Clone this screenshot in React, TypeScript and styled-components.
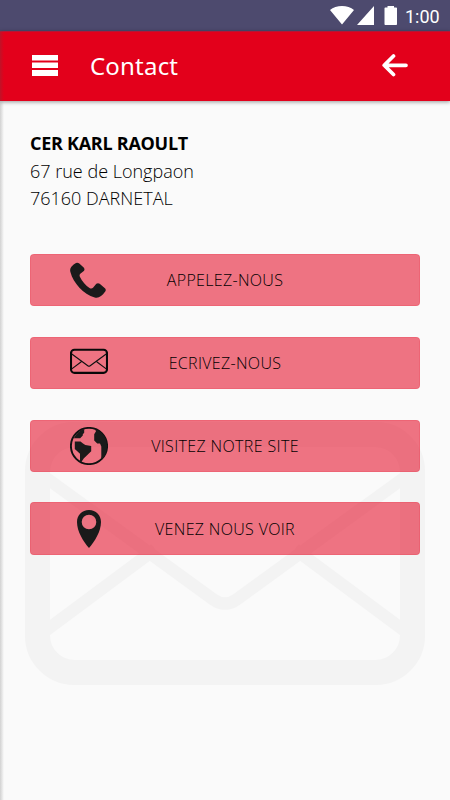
import React from "react";
import styled, { createGlobalStyle } from "styled-components";

const GlobalStyle = createGlobalStyle`
  * { box-sizing: border-box; }
  body { margin: 0; background: #fafafa; }
`;

const Screen = styled.div`
  position: relative;
  display: flex;
  flex-direction: column;
  width: 450px;
  height: 800px;
  overflow: hidden;
  background: #fafafa;
  color: #000;
  font-family: "Open Sans", sans-serif;
`;

const StatusBar = styled.div`
  display: flex;
  justify-content: flex-end;
  height: 31px;
  background: #4d4a6e;
`;

const StatusIcons = styled.svg`
  width: 75px;
  height: 31px;
  fill: #fff;
`;

const Clock = styled.time`
  width: 45px;
  color: #fff;
  font: 400 18px/33px Roboto, sans-serif;
`;

const Header = styled.header`
  display: flex;
  align-items: center;
  flex: none;
  height: 70px;
  padding: 0 42px 2px 32px;
  background: #e3001b;
  border-top: 1px solid #b61635;
  box-shadow: 0 1px 4px rgba(0, 0, 0, 0.4);
`;

const IconButton = styled.button`
  display: flex;
  padding: 0;
  border: 0;
  background: none;
`;

const Title = styled.h1`
  flex: 1;
  margin: 0 0 0 32px;
  color: #fff;
  font: 400 24px/34px "Noto Sans", sans-serif;
  letter-spacing: 0.2px;
`;

const Content = styled.main`
  position: relative;
  flex: 1;
  padding: 29px 30px 0;
`;

const Address = styled.address`
  height: 123.8px;
  font-size: 18px;
  font-weight: 300;
  font-style: normal;
  line-height: 27.5px;
`;

const AddressLine = styled.div`
  letter-spacing: 0;
`;

const Company = styled.strong`
  display: block;
  font-weight: 700;
  letter-spacing: -0.27px;
`;

const Actions = styled.nav`
  display: flex;
  flex-direction: column;
  gap: 30.2px;
`;

const Action = styled.button`
  display: grid;
  grid-template-columns: 98px 1fr 98px;
  align-items: center;
  height: 52.7px;
  padding: 0;
  border: 1px solid rgba(227, 0, 27, 0.12);
  border-radius: 4px;
  background: rgba(227, 0, 27, 0.54);
  color: #000;
`;

const ActionIcon = styled.svg`
  width: 38px;
  height: 38px;
  margin-left: 39px;
`;

const ActionLabel = styled.span<{ $spacing: number }>`
  font: 300 16px/22px "Open Sans", sans-serif;
  letter-spacing: ${({ $spacing }) => $spacing}px;
  text-align: center;
  white-space: nowrap;
`;

const Watermark = styled.svg`
  position: absolute;
  left: 25px;
  top: 422px;
  width: 400px;
  height: 263px;
  pointer-events: none;
`;

const EdgeShadow = styled.div`
  position: absolute;
  left: 0;
  top: 31px;
  bottom: 0;
  width: 4px;
  background: linear-gradient(to right, rgba(80, 80, 80, 0.24), rgba(80, 80, 80, 0));
`;

const Envelope = () => (
  <>
    <rect x="12.5" y="12.5" width="375" height="238" rx="37" strokeWidth="25" />
    <path
      d="M18 53.6L188 177.2Q200 185.9 212 177.2L382 53.6M18 210.7L130 127.3M382 210.7L270 127.3"
      strokeWidth="12.2"
    />
  </>
);

const Phone = () => (
  <path
    fill="#1a1a1a"
    transform="translate(0 .6)"
    d="M6 1.4Q7.5.6 9 1.7L13.7 6Q15.2 8 13.8 9.5L10.3 12.2Q9 13.4 10 15.3C12 19.5 16 24 19.5 26.3Q21.5 27.7 23 26.2L26.3 22.2Q28 20.9 29.7 22.2L35.2 26.8Q36.4 28.4 35 30.2C32 34.8 28.5 36.8 24.7 35.8C13.5 32.8 3.3 21.3.4 10.3Q-.5 7 1.6 4.8Q3.5 2.5 6 1.4Z"
  />
);

const Mail = () => (
  <g transform="translate(0 -.9)">
    <rect x="1" y="6.6" width="36" height="23.2" rx="3.5" fill="none" stroke="#080808" strokeWidth="2.1" />
    <path
      d="M1.8 10.9L17.8 22.7Q19 23.6 20.2 22.7L36.2 10.9M1.8 25.8L11.3 18.7M36.2 25.8L26.7 18.7"
      fill="none"
      stroke="#111"
      strokeWidth="1.15"
    />
  </g>
);

const Globe = () => (
  <>
    <circle cx="19" cy="19" r="18.1" fill="none" stroke="#111" strokeWidth="1.9" />
    <path
      fill="#1a1a1a"
      d="M4 11Q7.5 4.2 14.2 2.1V5.8L12.8 7.2V8.5L10.2 11.3H4ZM25 2.2C32 4 37 11 37 18.5C37 25 34.7 29.8 31.1 32.8L31.3 29V19.5L30 16.5H27.2L24.2 13.5V7.2L26 4.3ZM4.8 14.5H10.5L13 16.4L15.3 18.1L21.2 19V24.2L13.7 31.4L11.2 35.2H10V26.8L7 24L4.8 22Z"
    />
  </>
);

const Pin = () => (
  <path
    fill="#1a1a1a"
    fillRule="evenodd"
    d="M19 0C26 0 31 5 31 12C31 21.5 24.7 31.4 19 38C13.3 31.4 7 21.5 7 12C7 5 12 0 19 0ZM19 4.7A7.3 7.3 0 1 0 19 19.3A7.3 7.3 0 1 0 19 4.7Z"
  />
);

const actions = [
  { label: "APPELEZ-NOUS", icon: <Phone />, spacing: 0.32 },
  { label: "ECRIVEZ-NOUS", icon: <Mail />, spacing: 0.32 },
  { label: "VISITEZ NOTRE SITE", icon: <Globe />, spacing: 0.36 },
  { label: "VENEZ NOUS VOIR", icon: <Pin />, spacing: 0.33 },
];

export default function App() {
  return (
    <>
      <GlobalStyle />
      <Screen>
        <StatusBar>
          <StatusIcons viewBox="330 0 75 31">
            <path d="M330 10C336 4.8 348 4.8 354 10L342 24.5ZM357 25L374 6V25ZM384.5 8.3Q384.5 7.5 385.3 7.5H387.5V6H394V7.5H396.2Q397 7.5 397 8.3V24.2Q397 25 396.2 25H385.3Q384.5 25 384.5 24.2Z" />
          </StatusIcons>
          <Clock>1:00</Clock>
        </StatusBar>
        <Header>
          <IconButton aria-label="Menu">
            <svg width="26" height="21" fill="#fff">
              <path d="M0 0H26V5.5H0ZM0 7.5H26V13H0ZM0 15H26V21H0Z" />
            </svg>
          </IconButton>
          <Title>Contact</Title>
          <IconButton aria-label="Retour">
            <svg width="26" height="24" fill="none" stroke="#fff" strokeWidth="3.7" strokeLinecap="round" strokeLinejoin="round">
              <path d="M11.5 2L2.2 11.3L11.5 20.5M2.5 11.3H24" />
            </svg>
          </IconButton>
        </Header>
        <Watermark viewBox="0 0 400 263" fill="none" stroke="#000" opacity="0.022">
          <Envelope />
        </Watermark>
        <Content>
          <Address>
            <Company>CER KARL RAOULT</Company>
            <AddressLine>67 rue de Longpaon</AddressLine>
            <AddressLine>76160 DARNETAL</AddressLine>
          </Address>
          <Actions>
            {actions.map(({ label, icon, spacing }) => (
              <Action key={label}>
                <ActionIcon viewBox="0 0 38 38">{icon}</ActionIcon>
                <ActionLabel $spacing={spacing}>{label}</ActionLabel>
              </Action>
            ))}
          </Actions>
        </Content>
        <EdgeShadow />
      </Screen>
    </>
  );
}
